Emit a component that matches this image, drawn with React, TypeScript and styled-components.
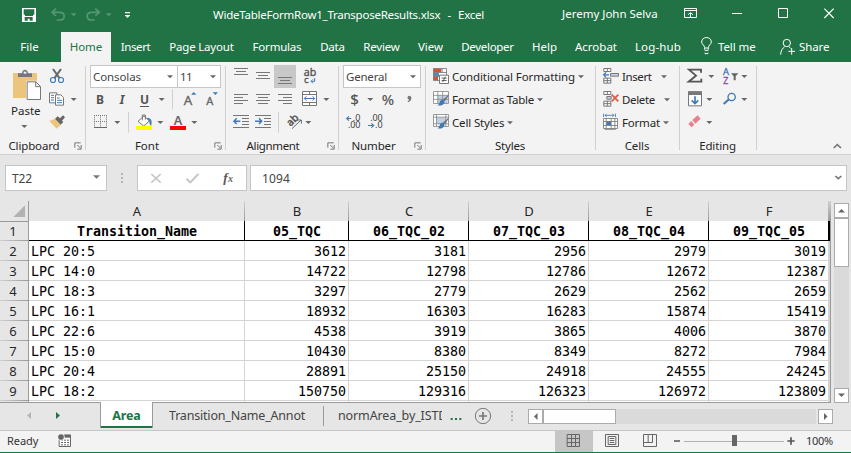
import React from 'react';
import styled, { createGlobalStyle, css } from 'styled-components';

const GREEN = '#217346';
const PANEL = '#f3f3f3';
const CHROME = '#e6e6e6';
const UI = '"Noto Sans", "Open Sans", sans-serif';
const MONO = '"DejaVu Sans Mono", "Liberation Mono", monospace';

const Global = createGlobalStyle`
  * { box-sizing: border-box; }
  html, body { margin: 0; padding: 0; overflow: hidden; }
  body { font: 11.5px ${UI}; color: #262626; background: ${PANEL}; }
  svg { display: block; flex: none; }
`;

const Window = styled.div`
  width: 851px;
  height: 453px;
  display: flex;
  flex-direction: column;
  background: ${CHROME};
  overflow: hidden;
  white-space: nowrap;
`;

/* Icons are drawn on a grid of three units per CSS pixel. */
type IconProps = { x: number; y: number; w: number; h: number; children?: React.ReactNode };
const Icon = ({ x, y, w, h, children }: IconProps) => (
  <svg width={w / 3} height={h / 3} viewBox={`${x} ${y} ${w} ${h}`} fill="none">
    {children}
  </svg>
);
const Tri = ({ x, y, c = '#666' }: { x: number; y: number; c?: string }) => (
  <path d={`M${x - 9} ${y - 4}h18l-9 9z`} fill={c} />
);
const Caret = () => (
  <svg width="6" height="4" viewBox="0 0 18 12"><path d="M0 1h18l-9 9z" fill="#666" /></svg>
);

const Label = styled.span<{ $w?: number; $ls?: number }>`
  flex: none;
  ${(p) => p.$w && css`width: ${p.$w}px;`}
  letter-spacing: ${(p) => p.$ls ?? 0}px;
`;

/* ---------- Title bar and ribbon tabs ---------- */

const TitleBar = styled.header`
  display: flex;
  height: 32px;
  flex: none;
  background: ${GREEN};
  color: #fff;
  line-height: 30px;
`;
const FileTitle = styled(Label)`
  width: 349px;
  margin-left: 73px;
  white-space: pre;
  word-spacing: 0.8px;
`;
const UserName = styled(Label)`
  width: 98px;
  line-height: 27px;
`;
const TabBar = styled.nav`
  display: flex;
  height: 30px;
  flex: none;
  background: ${GREEN};
`;
const Tab = styled.div<{ $w: number; $ls?: number; $on?: boolean }>`
  width: ${(p) => p.$w}px;
  flex: none;
  text-align: center;
  line-height: 30px;
  letter-spacing: ${(p) => p.$ls ?? 0}px;
  color: ${(p) => (p.$on ? GREEN : '#fff')};
  background: ${(p) => (p.$on ? PANEL : 'transparent')};
`;
const TabAction = styled.div<{ $w: number }>`
  display: flex;
  width: ${(p) => p.$w}px;
  flex: none;
  line-height: 30px;
  color: #fff;
`;

const tabs: [string, number, number?][] = [
  ['File', 59], ['Home', 50], ['Insert', 49, -0.4], ['Page Layout', 83, -0.2], ['Formulas', 68, -0.2],
  ['Data', 43, -0.2], ['Review', 55, -0.2], ['View', 43], ['Developer', 71, -0.3], ['Help', 43],
  ['Acrobat', 60], ['Log-hub', 64, 0.15],
];

const Head = () => (
  <>
    <TitleBar>
      <Icon x={0} y={0} w={135} h={96}>
        <path fillRule="evenodd" d="M66 24h42v42h-42zM71 28v16h4v4h24v-4h4v-16zM74 51v11h9v-6h6v6h9v-11z" fill="#fff" />
      </Icon>
      <Icon x={135} y={0} w={108} h={96}>
        <path d="M168 26l-12 11 12 11M157 37h22c18 0 18 23 0 23h-9" stroke="#579674" strokeWidth="5" />
        <Tri x={221} y={44} c="#579674" />
      </Icon>
      <Icon x={243} y={0} w={108} h={96}>
        <path d="M286 26l12 11-12 11M297 37h-22c-18 0-18 23 0 23h9" stroke="#579674" strokeWidth="5" />
        <Tri x={326} y={44} c="#579674" />
      </Icon>
      <Icon x={351} y={0} w={69} h={96}>
        <path d="M375 36h15v4h-15zM374 45h17l-8.500 9z" fill="#fff" />
      </Icon>
      <FileTitle $ls={-0.24}>WideTableFormRow1_TransposeResults.xlsx{'  -  '}Excel</FileTitle>
      <UserName>Jeremy John Selva</UserName>
      <Icon x={279} y={0} w={171} h={96}>
        <path d="M352.500 25.500h36v27h-36zM351 31.500h38M370.500 52V39M363 44l7.500-6 7.500 6" stroke="#fff" strokeWidth="3" />
      </Icon>
      <Icon x={450} y={0} w={129} h={96}><path d="M495 40.500h30" stroke="#fff" strokeWidth="3" /></Icon>
      <Icon x={579} y={0} w={138} h={96}><path d="M634.500 25.500h27v27h-27z" stroke="#fff" strokeWidth="3" /></Icon>
      <Icon x={717} y={0} w={135} h={96}><path d="M772 26l28 28M800 26l-28 28" stroke="#fff" strokeWidth="3.500" /></Icon>
    </TitleBar>
    <TabBar>
      {tabs.map(([name, w, ls]) => (
        <React.Fragment key={name}>
          <Tab $w={w} $ls={ls} $on={name === 'Home'}>{name}</Tab>
          {name === 'File' && <Label $w={2} />}
        </React.Fragment>
      ))}
      <TabAction $w={87}>
        <Icon x={366} y={96} w={84} h={90}>
          <path d="M410 149v-6c0-7-9-10-9-17 0-18 29-18 29 0 0 7-9 10-9 17v6M410 144h11M410 151h11M411 158v3h9v-3" stroke="#fff" strokeWidth="3" />
        </Icon>
        <Label $ls={-0.1}>Tell me</Label>
      </TabAction>
      <TabAction $w={74}>
        <Icon x={630} y={96} w={66} h={90}>
          <circle cx="659.500" cy="129" r="11" stroke="#fff" strokeWidth="3" />
          <path d="M641 164c0-13 6-19 12-24M666 140l4 5M664 154h20M674 144v20" stroke="#fff" strokeWidth="3" />
        </Icon>
        <Label $ls={-0.1}>Share</Label>
      </TabAction>
    </TabBar>
  </>
);

/* ---------- Ribbon ---------- */

const RibbonBar = styled.div`
  display: flex;
  height: 93px;
  flex: none;
  padding-top: 3px;
  background: ${PANEL};
  border-bottom: 1px solid #d2d0ce;
`;
const GroupBox = styled.section<{ $w: number }>`
  position: relative;
  width: ${(p) => p.$w}px;
  flex: none;
  display: flex;
  flex-direction: column;
  &::after {
    content: '';
    position: absolute;
    right: 0;
    top: 1px;
    width: 1px;
    height: 84px;
    background: #d2d0ce;
  }
`;
const GroupBody = styled.div<{ $pad: number }>`
  display: flex;
  height: 69px;
  padding-left: ${(p) => p.$pad}px;
`;
const GroupFoot = styled.div`
  display: flex;
  height: 20px;
  line-height: 24px;
`;
const GroupName = styled(Label)<{ $inset: number }>`
  flex: 1;
  padding-right: ${(p) => p.$inset}px;
  text-align: center;
`;
const Stack = styled.div`
  display: flex;
  flex-direction: column;
`;
const Row = styled.div`
  display: flex;
  height: 23px;
  line-height: 23px;
`;
const Command = styled.div<{ $gap?: number }>`
  display: flex;
  align-items: center;
  height: 23px;
  svg:last-child { margin-left: ${(p) => p.$gap ?? 3}px; }
`;
const CommandName = styled(Label)`
  padding-left: 1px;
  line-height: 23px;
`;
const PasteName = styled(Label)`
  height: 17px;
  line-height: 18px;
  padding-left: 11px;
`;
const Combo = styled.div<{ $w: number }>`
  display: flex;
  align-items: center;
  justify-content: space-between;
  width: ${(p) => p.$w}px;
  height: 23px;
  padding: 0 4px 0 2px;
  background: #fff;
  border: 1px solid #c6c6c6;
  color: #444;
  & + & { margin-left: -1px; }
`;
const Glyph = styled.span<{ $w: number; $bold?: boolean; $italic?: boolean; $line?: boolean; $size?: number }>`
  width: ${(p) => p.$w}px;
  flex: none;
  text-align: center;
  color: #555;
  font-size: ${(p) => p.$size ?? 12}px;
  font-weight: ${(p) => (p.$bold ? 700 : 500)};
  font-style: ${(p) => (p.$italic ? 'italic' : 'normal')};
  text-decoration: ${(p) => (p.$line ? 'underline' : 'none')};
  text-underline-offset: 2px;
`;
const Spacer = styled.span<{ $w: number }>`
  width: ${(p) => p.$w}px;
  flex: none;
`;

const Launcher = () => (
  <svg width="12" height="20" viewBox="0 0 36 60">
    <path d="M2.500 41V26.500H20M10 33l10 10M21.500 33v12.500H10" stroke="#777" strokeWidth="3" fill="none" />
  </svg>
);

type GroupProps = { w: number; pad: number; name: string; ls?: number; launch?: boolean; inset?: number; children: React.ReactNode };
const Group = ({ w, pad, name, ls, launch, inset = 6, children }: GroupProps) => (
  <GroupBox $w={w}>
    <GroupBody $pad={pad}>{children}</GroupBody>
    <GroupFoot>
      <GroupName $ls={ls} $inset={inset}>{name}</GroupName>
      {launch && <Launcher />}
    </GroupFoot>
  </GroupBox>
);

const G = '#777';
const BLUE = '#3f7ab5';

const Brush = ({ y }: { y: number }) => (
  <>
    <path d={`M72 ${y + 17}l-8 12-5-3 9-9zM60 ${y + 24}l5 5-7 6-5-5z`} fill="#777" />
    <path d={`M52 ${y + 30}c5 1 8 5 6 9-3 7-11 10-21 8 5-2 6-5 7-9 1-5 4-8 8-8z`} fill={BLUE} />
  </>
);

const Ribbon = () => (
  <RibbonBar>
    <Group w={86} pad={0} name="Clipboard" ls={-0.15} launch>
      <Stack>
        <Icon x={0} y={15} w={135} h={111}>
          <path d="M39 39h72v75h-72z" fill="#ecc57d" />
          <path d="M54 51V40h12c0-14 18-14 18 0h12v11z" fill="#777" />
          <path d="M71 35h8v6h-8z" fill={PANEL} />
          <path d="M78 62h31l15 15v43H78z" fill={PANEL} />
          <path d="M81.500 65.500h26l14 14v39h-40zM107 66v14h14" fill="#fff" stroke={G} strokeWidth="3" />
        </Icon>
        <PasteName>Paste</PasteName>
        <Icon x={0} y={177} w={135} h={45}><Tri x={73} y={199} /></Icon>
      </Stack>
      <Stack>
        <Icon x={135} y={15} w={117} h={69}>
          <path d="M159 27l20 28M183 27l-20 28" stroke="#666" strokeWidth="6" />
          <circle cx="159" cy="60" r="7.500" stroke={BLUE} strokeWidth="3.500" />
          <circle cx="183" cy="60" r="7.500" stroke={BLUE} strokeWidth="3.500" />
        </Icon>
        <Icon x={135} y={84} w={117} h={69}>
          <path d="M148.500 98.500h22v30h-22z" fill="#fff" stroke={G} strokeWidth="3" />
          <path d="M153 106h9M153 113h9M153 120h9" stroke={BLUE} strokeWidth="3" />
          <path d="M166.500 104.500h16l8 8v23h-24z" fill="#fff" stroke={G} strokeWidth="3" />
          <path d="M171 114h8M171 121h15M171 128h15" stroke={BLUE} strokeWidth="3" />
          <Tri x={221} y={118} />
        </Icon>
        <Icon x={135} y={153} w={117} h={69}>
          <path d="M148 183l17-7 18 18-13 12z" fill="#ecc57d" />
          <path d="M165 176l8-7 7 6 9-9 6 6-9 10 4 4-8 8z" fill="#666" />
        </Icon>
      </Stack>
    </Group>

    <Group w={140} pad={4} name="Font" launch>
      <Stack>
        <Row>
          <Combo $w={88}><Label $ls={-0.1}>Consolas</Label><Caret /></Combo>
          <Combo $w={44}><Label $ls={-0.7}>11</Label><Caret /></Combo>
        </Row>
        <Row>
          <Glyph $w={20} $bold>B</Glyph>
          <Glyph $w={24} $bold $italic>I</Glyph>
          <Glyph $w={21} $bold $line>U</Glyph>
          <Icon x={465} y={84} w={63} h={69}>
            <Tri x={485} y={118} />
            <path d="M517.500 88v60" stroke="#d0d0d0" strokeWidth="3" />
          </Icon>
          <Icon x={528} y={84} w={72} h={69}>
            <text x="551" y="134" fontSize="40" fill="#666" stroke="#666" strokeWidth="1">A</text>
            <path d="M573 104l8-8 8 8z" fill={BLUE} />
          </Icon>
          <Icon x={600} y={84} w={60} h={69}>
            <text x="619" y="134" fontSize="33" fill="#666" stroke="#666" strokeWidth="1">A</text>
            <path d="M638 97h16l-8 8z" fill={BLUE} />
          </Icon>
        </Row>
        <Row>
          <Icon x={270} y={153} w={126} h={69}>
            <path d="M282 166.500h39M282 184.500h39M283.500 166v36M301.500 166v36M319.500 166v36" stroke="#777" strokeWidth="3" strokeDasharray="3 3" />
            <path d="M282 202.500h39" stroke="#666" strokeWidth="3" />
            <Tri x={352} y={187} />
            <path d="M385.500 156v62" stroke="#d0d0d0" strokeWidth="3" />
          </Icon>
          <Icon x={396} y={153} w={105} h={69}>
            <path d="M414 184l18-16 16 15-17 15z" fill="#fff" stroke="#777" strokeWidth="3" />
            <path d="M427 181v-16h9v14" stroke="#777" strokeWidth="3" />
            <path d="M440 173c14-1 18 11 13 24-4-2-5-8-5-14z" fill={BLUE} />
            <path d="M408 198h48v12h-48z" fill="#ff0" />
            <Tri x={481} y={187} />
          </Icon>
          <Icon x={501} y={153} w={120} h={69}>
            <text x="521" y="196" fontSize="38" fontWeight="600" fill="#666">A</text>
            <path d="M510 198h48v12h-48z" fill="#f00" />
            <Tri x={583} y={187} />
          </Icon>
        </Row>
      </Stack>
    </Group>

    <Group w={113} pad={0} name="Alignment" ls={-0.35} inset={7} launch>
      <Stack>
        <Row>
          <Icon x={18} y={15} w={216} h={69}>
            <path d="M42 25.500h42M48 34.500h30M42 43.500h42M108 37.500h42M114 46.500h30M108 55.500h42" stroke={G} strokeWidth="3" />
            <path d="M162 15h66v69h-66z" fill="#c8c8c8" />
            <path d="M174 52.500h42M180 61.500h30M174 70.500h42" stroke={G} strokeWidth="3" />
          </Icon>
          <Icon x={234} y={15} w={102} h={69}>
            <text x="251" y="47" fontSize="32" fill="#555" stroke="#555" strokeWidth="1">ab</text>
            <text x="252" y="69" fontSize="29" fill="#555" stroke="#555" strokeWidth="1">c</text>
            <path d="M284 54v10h-10M279 58l-6 6 6 6" stroke={BLUE} strokeWidth="3" />
          </Icon>
        </Row>
        <Row>
          <Icon x={18} y={84} w={216} h={69}>
            <path d="M42 103.500h42M42 112.500h27M42 121.500h42M42 130.500h27M108 103.500h42M114 112.500h30M108 121.500h42M114 130.500h30M174 103.500h42M189 112.500h27M174 121.500h42M189 130.500h27" stroke={G} strokeWidth="3" />
          </Icon>
          <Icon x={234} y={84} w={102} h={69}>
            <path d="M247.500 94.500h42v42h-42zM247 103.500h42M247 127.500h42M268.500 94v9M268.500 127v9" fill="#fff" stroke={G} strokeWidth="3" />
            <path d="M253 115.500h31M259 109l-6 6.500 6 6.500M278 109l6 6.500-6 6.500" stroke={BLUE} strokeWidth="3" />
            <Tri x={319} y={118} />
          </Icon>
        </Row>
        <Row>
          <Icon x={18} y={153} w={168} h={69}>
            <path d="M39 166.500h48M66 175.500h21M66 184.500h21M66 193.500h21M39 202.500h48M105 166.500h48M132 175.500h21M132 184.500h21M132 193.500h21M105 202.500h48" stroke={G} strokeWidth="3" />
            <path d="M61 183.500H43M50 175l-8 8.500 8 8.500M105 183.500h18M117 175l8 8.500-8 8.500" stroke={BLUE} strokeWidth="4.500" />
            <path d="M175.500 156v62" stroke="#d0d0d0" strokeWidth="3" />
          </Icon>
          <Icon x={186} y={153} w={108} h={69}>
            <text x="201" y="194" fontSize="31" fill="#555" stroke="#555" strokeWidth="1.500" transform="rotate(-45 214 184)">ab</text>
            <path d="M216 206l27-26M233 180h11v11" stroke="#666" strokeWidth="3" />
            <Tri x={265} y={187} />
          </Icon>
        </Row>
      </Stack>
    </Group>

    <Group w={87} pad={4} name="Number" ls={-0.15} launch>
      <Stack>
        <Row><Combo $w={78}><Label $ls={-0.2}>General</Label><Caret /></Combo></Row>
        <Row>
          <Glyph $w={23} $size={15}>$</Glyph>
          <Icon x={438} y={84} w={39} h={69}><Tri x={451} y={118} /></Icon>
          <Glyph $w={18} $size={14.5}>%</Glyph>
          <Icon x={531} y={84} w={63} h={69}>
            <circle cx="568" cy="113" r="5.500" fill="#777" />
            <path d="M574 112c1 8-3 13-10 15l-1-3c4-2 5-5 5-9z" fill="#777" />
          </Icon>
        </Row>
        <Row>
          <Icon x={369} y={153} w={66} h={69}>
            <text x="398" y="183" fontSize="27" fill="#444" textLength="23">.0</text>
            <text x="384" y="205" fontSize="27" fill="#444" textLength="37">.00</text>
            <path d="M380 175.500h14M387 169l-7 6.500 7 6.500" stroke={BLUE} strokeWidth="3.500" />
          </Icon>
          <Icon x={435} y={153} w={66} h={69}>
            <text x="451" y="183" fontSize="27" fill="#444" textLength="37">.00</text>
            <text x="465" y="205" fontSize="27" fill="#444" textLength="23">.0</text>
            <path d="M444 196.500h16M454 190l7 6.500-7 6.500" stroke={BLUE} strokeWidth="3.500" />
          </Icon>
        </Row>
      </Stack>
    </Group>

    <Group w={170} pad={5} name="Styles" ls={-0.2} inset={2}>
      <Stack>
        <Command>
          <Icon x={18} y={15} w={60} h={69}>
            <path d="M25.500 25.500h39v36h-39z" fill="#fff" />
            <path d="M25 26h24v11H25zM25 51h14v10H25z" fill="#d6532d" />
            <path d="M25 38h17v12H25z" fill="#5b87b5" />
            <path d="M25.500 25.500h39v36h-39zM51.500 26v12M25 37.500h40M25 49.500h18" stroke={G} strokeWidth="2.500" />
            <path d="M43.500 45.500h27v25h-27z" fill="#fff" stroke={G} strokeWidth="3" />
            <path d="M50 54.500h15M50 61.500h15M61 50l-8 16" stroke="#444" strokeWidth="2.500" />
          </Icon>
          <CommandName $ls={-0.1}>Conditional Formatting</CommandName><Caret />
        </Command>
        <Command>
          <Icon x={18} y={84} w={60} h={69}>
            <path d="M25.500 94.500h42v36h-42z" fill="#fff" />
            <path d="M38 106h30v24H38z" fill="#bdd0e6" />
            <path d="M25.500 94.500h45v36h-45zM25 106h45M25 118h45M38.500 94v36M53 94v36" stroke="#888" strokeWidth="2.500" />
            <Brush y={89} />
          </Icon>
          <CommandName $ls={-0.22}>Format as Table</CommandName><Caret />
        </Command>
        <Command>
          <Icon x={18} y={153} w={60} h={69}>
            <path d="M25.500 163.500h45v36h-45z" fill="#fff" />
            <path d="M34 172h29v20H34z" fill="#bdd0e6" />
            <path d="M25.500 163.500h45v36h-45zM25 171.500h45M25 191.500h45M34.500 163v36M62.500 163v36" stroke="#888" strokeWidth="2.500" />
            <Brush y={158} />
          </Icon>
          <CommandName $ls={-0.15}>Cell Styles</CommandName><Caret />
        </Command>
      </Stack>
    </Group>

    <Group w={84} pad={6} name="Cells" ls={-0.1} inset={2}>
      <Stack>
        <Command $gap={9}>
          <Icon x={531} y={15} w={57} h={69}>
            <path d="M536.500 25.500h21v9h-21zM547 25v9M536.500 54.500h21v15h-21zM547 54v15M536 62h22" fill="#fff" stroke={G} strokeWidth="3" />
            <path d="M556.500 40.500h24v8h-24z" fill="#c5d6ea" stroke={G} strokeWidth="3" />
            <path d="M552 44.500h-16M543 37l-7 7.500 7 7.500" stroke={BLUE} strokeWidth="4" />
          </Icon>
          <CommandName $ls={-0.4}>Insert</CommandName><Caret />
        </Command>
        <Command $gap={9}>
          <Icon x={531} y={84} w={57} h={69}>
            <path d="M536.500 94.500h21v9h-21zM547 94v9M536.500 123.500h21v15h-21zM547 123v15M536 131h22" fill="#fff" stroke={G} strokeWidth="3" />
            <path d="M545.500 109.500h13v8h-13z" fill="#c5d6ea" stroke={G} strokeWidth="3" />
            <path d="M560 104l20 20M580 104l-20 20" stroke="#e0583f" strokeWidth="5" />
          </Icon>
          <CommandName $ls={-0.35}>Delete</CommandName><Caret />
        </Command>
        <Command>
          <Icon x={531} y={153} w={57} h={69}>
            <path d="M535.500 161v10M571.500 161v10M539 166h29M545 162l-5 4 5 4M562 162l5 4-5 4" stroke={BLUE} strokeWidth="2.500" />
            <path d="M535.500 175.500h42v30h-42z" fill="#fff" />
            <path d="M544 184h14v12h-14z" fill={BLUE} />
            <path d="M535.500 175.500h42v30h-42zM535 184.500h42M535 196.500h42M543.500 175v30M558.500 175v30M569.500 175v30M539 208h33" stroke={G} strokeWidth="2.500" />
          </Icon>
          <CommandName $ls={-0.2}>Format</CommandName><Caret />
        </Command>
      </Stack>
    </Group>

    <Group w={77} pad={0} name="Editing" ls={-0.15} inset={2}>
      <Stack>
        <Row>
          <Icon x={120} y={15} w={114} h={69}>
            <path d="M183 38V29h-36l21 18-22 18h38v-9" stroke="#555" strokeWidth="5.500" />
            <Tri x={214} y={49} />
          </Icon>
          <Icon x={234} y={15} w={108} h={69}>
            <text x="249" y="46" fontSize="28" fill={BLUE} stroke={BLUE} strokeWidth="1">A</text>
            <text x="250" y="72" fontSize="26" fill="#8a52a8" stroke="#8a52a8" strokeWidth="1">Z</text>
            <path d="M273 40h22l-8 9v12h-6V49z" fill="#666" />
            <Tri x={313} y={49} />
          </Icon>
        </Row>
        <Row>
          <Icon x={120} y={84} w={114} h={69}>
            <path d="M145.500 95.500h39v42h-39z" fill="#fff" stroke={G} strokeWidth="3" />
            <path d="M144 94h42v11h-42z" fill={G} />
            <path d="M165 109v20M155 121l10 10 10-10" stroke={BLUE} strokeWidth="5" />
            <Tri x={208} y={118} />
          </Icon>
          <Icon x={234} y={84} w={108} h={69}>
            <circle cx="275" cy="111" r="11" stroke={BLUE} strokeWidth="4" />
            <path d="M267 118l-16 14" stroke={BLUE} strokeWidth="6" />
            <Tri x={313} y={118} />
          </Icon>
        </Row>
        <Row>
          <Icon x={120} y={153} w={114} h={69}>
            <path d="M157 180l16-14 9 10-16 15z" fill="#e8808f" />
            <path d="M154 183l9 11-8 8-10-10z" fill="#e8808f" />
            <Tri x={208} y={187} />
          </Icon>
        </Row>
      </Stack>
    </Group>
    <Icon x={351} y={15} w={282} h={261}>
      <path d="M581 264l11-10 11 10" stroke="#777" strokeWidth="5" />
    </Icon>
  </RibbonBar>
);

/* ---------- Formula bar ---------- */

const FormulaBar = styled.div`
  display: flex;
  height: 46px;
  flex: none;
  padding: 10px 4px 10px 5px;
`;
const Field = styled.div<{ $w?: number }>`
  display: flex;
  align-items: center;
  justify-content: space-between;
  ${(p) => (p.$w ? css`width: ${p.$w}px; flex: none;` : css`flex: 1;`)}
  height: 26px;
  background: #fff;
  border: 1px solid #c6c6c6;
  font-size: 12px;
  color: #444;
`;
const FieldText = styled(Label)`
  padding-left: 6px;
`;
const Value = styled(FieldText)`
  padding-left: 11px;
`;

const Formula = () => (
  <FormulaBar>
    <Field $w={102}>
      <FieldText $ls={-0.1}>T22</FieldText>
      <Icon x={270} y={18} w={48} h={72}><path d="M279 46h21l-10.500 10z" fill="#777" /></Icon>
    </Field>
    <Icon x={321} y={15} w={90} h={78}>
      <path d="M363 39h6v6h-6zM363 51h6v6h-6zM363 63h6v6h-6z" fill="#b5b5b5" />
    </Icon>
    <Field $w={110}>
      <Icon x={414} y={18} w={108} h={72}>
        <path d="M454 42l28 26M482 42l-28 26" stroke="#c6c6c6" strokeWidth="5" />
      </Icon>
      <Icon x={522} y={18} w={108} h={72}>
        <path d="M559 56l12 11 24-25" stroke="#c6c6c6" strokeWidth="6" />
      </Icon>
      <Icon x={630} y={18} w={108} h={72}>
        <text x="670" y="65" fontSize="39" fontStyle="italic" fontWeight="600" fontFamily="Liberation Serif" fill="#555">f</text>
        <text x="684" y="66" fontSize="30" fontStyle="italic" fontWeight="700" fontFamily="Liberation Serif" fill="#666">x</text>
      </Icon>
    </Field>
    <Spacer $w={3} />
    <Field>
      <Value $ls={0.1}>1094</Value>
      <Icon x={789} y={18} w={48} h={72}><path d="M805 48l9 8 9-8" stroke="#777" strokeWidth="5" /></Icon>
    </Field>
  </FormulaBar>
);

/* ---------- Worksheet ---------- */

const SheetArea = styled.div`
  display: flex;
  height: 202px;
  flex: none;
`;
const Sheet = styled.div`
  width: 831px;
  flex: none;
  display: flex;
  flex-direction: column;
  overflow: hidden;
  border-bottom: 1px solid #9a9a9a;
`;
const SheetRow = styled.div`
  display: grid;
  grid-template-columns: 29px 216px 104px repeat(4, 120px) 1px 1px;
  height: 20px;
  flex: none;
`;
const Corner = styled.div`
  display: flex;
  border-right: 1px solid #9a9a9a;
  border-bottom: 1px solid #9a9a9a;
`;
const ColumnHead = styled.div`
  text-align: center;
  font-size: 13px;
  line-height: 20px;
  border-bottom: 1px solid #9a9a9a;
  background: linear-gradient(#d0d0d0, #9a9a9a) right / 1px 100% no-repeat;
`;
const RowHead = styled.div`
  text-align: center;
  font-size: 13px;
  line-height: 20px;
  padding-right: 2px;
  border-right: 1px solid #9a9a9a;
  background: linear-gradient(90deg, #d0d0d0, #9a9a9a) bottom / 100% 1px no-repeat;
`;
const Cell = styled.div<{ $kind: 'head' | 'name' | 'num' }>`
  font: 13.3px ${MONO};
  line-height: 20px;
  color: #000;
  background: #fff;
  overflow: hidden;
  border-right: 1px solid ${(p) => (p.$kind === 'head' ? '#000' : '#d4d4d4')};
  border-bottom: 1px solid ${(p) => (p.$kind === 'head' ? '#000' : '#d4d4d4')};
  font-weight: ${(p) => (p.$kind === 'head' ? 700 : 400)};
  text-align: ${(p) => ({ head: 'center', name: 'left', num: 'right' })[p.$kind]};
  padding: ${(p) => ({ head: '1px 0 0 1px', name: '1px 0 0 2px', num: '1px 2px 0 0' })[p.$kind]};
`;
const Sliver = styled(Cell)`
  padding: 0;
`;
const SheetEdge = styled.div`
  background: #9a9a9a;
`;

const rows = [
  ['Transition_Name', '05_TQC', '06_TQC_02', '07_TQC_03', '08_TQC_04', '09_TQC_05'],
  ['LPC 20:5', '3612', '3181', '2956', '2979', '3019'],
  ['LPC 14:0', '14722', '12798', '12786', '12672', '12387'],
  ['LPC 18:3', '3297', '2779', '2629', '2562', '2659'],
  ['LPC 16:1', '18932', '16303', '16283', '15874', '15419'],
  ['LPC 22:6', '4538', '3919', '3865', '4006', '3870'],
  ['LPC 15:0', '10430', '8380', '8349', '8272', '7984'],
  ['LPC 20:4', '28891', '25150', '24918', '24555', '24245'],
  ['LPC 18:2', '150750', '129316', '126323', '126972', '123809'],
  ['', '', '', '', '', ''],
];

const VerticalBar = styled.div`
  display: flex;
  flex-direction: column;
  width: 15px;
  height: 200px;
  margin: 2px 0 0 3px;
  background: #dadada;
`;
const HorizontalBar = styled.div`
  display: flex;
  width: 305px;
  height: 15px;
  margin-top: 6px;
`;
const ScrollButton = styled.div`
  width: 15px;
  height: 15px;
  flex: none;
  background: #fff;
  border: 1px solid #ababab;
`;
const Thumb = styled.div<{ $w: number; $h: number }>`
  width: ${(p) => p.$w}px;
  height: ${(p) => p.$h}px;
  flex: none;
  background: #fff;
  border: 1px solid #ababab;
`;
const Track = styled.div`
  flex: 1;
  background: #dadada;
`;
const Arrow = ({ d }: { d: string }) => (
  <svg width="13" height="13" viewBox="0 0 13 13"><path d={d} fill="#666" /></svg>
);

const Worksheet = () => (
  <SheetArea>
    <Sheet>
      <SheetRow>
        <Corner>
          <Icon x={0} y={123} w={84} h={57}><path d="M75 136v35H40z" fill="#b2b2b2" /></Icon>
        </Corner>
        {['A', 'B', 'C', 'D', 'E', 'F', '', ''].map((c, i) => <ColumnHead key={i}>{c}</ColumnHead>)}
      </SheetRow>
      {rows.map((cells, r) => (
        <SheetRow key={r}>
          <RowHead>{r < 9 ? r + 1 : ''}</RowHead>
          {cells.map((c, i) => (
            <Cell key={i} $kind={r === 0 ? 'head' : i === 0 ? 'name' : 'num'}>{c}</Cell>
          ))}
          <Sliver $kind={r === 0 ? 'head' : 'num'} />
          <SheetEdge />
        </SheetRow>
      ))}
    </Sheet>
    <VerticalBar>
      <ScrollButton><Arrow d="M3 8.500h7L6.500 5z" /></ScrollButton>
      <Thumb $w={15} $h={49} />
      <Track />
      <ScrollButton><Arrow d="M3 4.500h7L6.500 8z" /></ScrollButton>
    </VerticalBar>
  </SheetArea>
);

/* ---------- Sheet tabs and status bar ---------- */

const SheetTabs = styled.div`
  display: flex;
  height: 27px;
  flex: none;
  font-size: 12.5px;
  color: #444;
`;
const ActiveSheet = styled.div`
  width: 53px;
  height: 26px;
  margin-top: -1px;
  position: relative;
  text-align: center;
  line-height: 27px;
  font-weight: 700;
  letter-spacing: -0.1px;
  color: ${GREEN};
  background: #fff;
  border: solid #9a9a9a;
  border-width: 0 1px;
  box-shadow: inset 0 -2px ${GREEN};
`;
const SheetName = styled(Label)`
  line-height: 26px;
  overflow: hidden;
`;
const StatusBar = styled.footer`
  display: flex;
  height: 23px;
  flex: none;
  background: ${PANEL};
  border-top: 1px solid #c6c6c6;
  border-bottom: 1px solid ${GREEN};
  font-size: 11px;
  line-height: 20px;
  color: #333;
`;
const ViewButton = styled.div<{ $on?: boolean }>`
  background: ${(p) => (p.$on ? '#c6c6c6' : 'transparent')};
`;

const Foot = () => (
  <>
    <SheetTabs>
      <Icon x={0} y={99} w={144} h={81}><path d="M93 126v21l-12-10.500z" fill="#b5b5b5" /></Icon>
      <Icon x={144} y={99} w={156} h={81}><path d="M168 126v21l12-10.500z" fill={GREEN} /></Icon>
      <ActiveSheet>Area</ActiveSheet>
      <Spacer $w={16} />
      <SheetName $w={150} $ls={-0.19}>Transition_Name_Annot</SheetName>
      <Icon x={105} y={99} w={57} h={81}><path d="M118.500 108v60" stroke="#9a9a9a" strokeWidth="3" /></Icon>
      <SheetName $w={104} $ls={-0.12}>normArea_by_ISTD</SheetName>
      <Icon x={474} y={99} w={75} h={81}>
        <path d="M500 144h6v6h-6zM513 144h6v6h-6zM526 144h6v6h-6z" fill={GREEN} />
      </Icon>
      <Icon x={549} y={99} w={99} h={81}>
        <circle cx="597" cy="138" r="23" stroke="#777" strokeWidth="3" />
        <path d="M585 138h24M597 126v24" stroke="#777" strokeWidth="5" />
      </Icon>
      <Icon x={648} y={99} w={84} h={81}>
        <path d="M681 123h6v6h-6zM681 135h6v6h-6zM681 147h6v6h-6z" fill="#b8b8b8" />
      </Icon>
      <HorizontalBar>
        <ScrollButton><Arrow d="M8.500 3v7L5 6.500z" /></ScrollButton>
        <Thumb $w={73} $h={15} />
        <Track />
        <Spacer $w={2} />
        <ScrollButton><Arrow d="M5 3v7l3.500-3.500z" /></ScrollButton>
      </HorizontalBar>
    </SheetTabs>
    <StatusBar>
      <Spacer $w={7} />
      <Label $w={44} $ls={-0.05}>Ready</Label>
      <Icon x={153} y={183} w={87} h={63}>
        <path d="M177.500 195.500h34v34h-34z" fill="#fff" stroke="#666" strokeWidth="3" />
        <path d="M190 194h23v9h-23z" fill="#666" />
        <path d="M183 210.500h24M183 217.500h24M183 224.500h24" stroke="#666" strokeWidth="3" strokeDasharray="6 3" />
        <circle cx="183" cy="201" r="11" fill={PANEL} />
        <circle cx="183" cy="201" r="8.500" fill="#666" />
      </Icon>
      <Spacer $w={475} />
      <ViewButton $on>
        <Icon x={-36} y={183} w={114} h={63}>
          <path d="M.5 193.500h37v36H.5zM0 205.500h38M0 217.500h38M13.500 193v37M25.500 193v37" stroke="#666" strokeWidth="3" />
        </Icon>
      </ViewButton>
      <ViewButton>
        <Icon x={78} y={183} w={114} h={63}>
          <path d="M115.500 193.500h39v36h-39zM123.500 199.500h23v24h-23zM128 205.500h14M128 211.500h14M128 217.500h14" stroke="#666" strokeWidth="3" />
        </Icon>
      </ViewButton>
      <ViewButton>
        <Icon x={192} y={183} w={114} h={63}>
          <path d="M229.500 193.500h39v36h-39zM230 217.500h27M243.500 193v24M256.500 193v24" stroke="#666" strokeWidth="3" />
        </Icon>
      </ViewButton>
      <Icon x={306} y={183} w={411} h={63}>
        <path d="M321 213h18M661 213h22M672 202v22" stroke="#555" strokeWidth="5" />
        <path d="M351 214.500h300" stroke="#b0b0b0" strokeWidth="3" />
        <path d="M495 195h15v33h-15z" fill="#666" />
      </Icon>
      <Label $ls={-0.3}>100%</Label>
    </StatusBar>
  </>
);

export default function App() {
  return (
    <Window>
      <Global />
      <Head />
      <Ribbon />
      <Formula />
      <Worksheet />
      <Foot />
    </Window>
  );
}
